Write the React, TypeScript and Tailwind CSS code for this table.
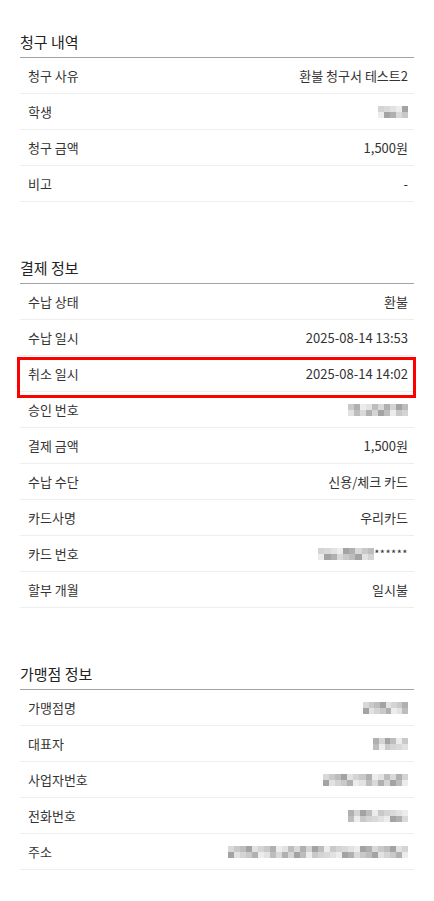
import React from "react";

type Row = { label: string; value?: string; blur?: number; suffix?: string; seed?: number };

const billing: Row[] = [
  { label: "청구 사유", value: "환불 청구서 테스트2" },
  { label: "학생", blur: 30, seed: 3 },
  { label: "청구 금액", value: "1,500원" },
  { label: "비고", value: "-" },
];

const payment: Row[] = [
  { label: "수납 상태", value: "환불" },
  { label: "수납 일시", value: "2025-08-14 13:53" },
  { label: "취소 일시", value: "2025-08-14 14:02" },
  { label: "승인 번호", blur: 60, seed: 7 },
  { label: "결제 금액", value: "1,500원" },
  { label: "수납 수단", value: "신용/체크 카드" },
  { label: "카드사명", value: "우리카드" },
  { label: "카드 번호", blur: 56, seed: 11, suffix: "******" },
  { label: "할부 개월", value: "일시불" },
];

const merchant: Row[] = [
  { label: "가맹점명", blur: 45, seed: 5 },
  { label: "대표자", blur: 35, seed: 9 },
  { label: "사업자번호", blur: 85, seed: 13 },
  { label: "전화번호", blur: 60, seed: 17 },
  { label: "주소", blur: 180, seed: 21 },
];

const grays = ["#ececec", "#d4d4d4", "#bdbdbd", "#b0b0b0", "#e2e2e2", "#c9c9c9", "#a3a3a3", "#d9d9d9"];

// pixelated placeholder for masked values
function Blur({ width, seed = 1 }: { width: number; seed?: number }) {
  const cols = Math.round(width / 6);
  const cells = (row: number) =>
    Array.from({ length: cols }, (_, i) => grays[(i * 5 + seed * 3 + row * 7 + ((i * i) % 3)) % grays.length]);
  return (
    <div className="flex flex-col" style={{ width }}>
      {[0, 1].map((r) => (
        <div key={r} className="flex">
          {cells(r).map((c, i) => (
            <div key={i} className="h-[6px] flex-1" style={{ backgroundColor: c }} />
          ))}
        </div>
      ))}
    </div>
  );
}

function Section({ title, rows, className = "" }: { title: string; rows: Row[]; className?: string }) {
  return (
    <section className={className}>
      <h2 className="text-[15px] leading-[22px] pb-[4px] text-[#222] border-b border-[#a3a3a3]">{title}</h2>
      {rows.map((r) => (
        <div key={r.label} className="relative h-[36px] pl-2 pr-[6px] flex items-center justify-between border-b border-[#eeeeee] text-[13px] text-[#333]">
          <span>{r.label}</span>
          {r.blur ? (
            <div className="flex items-center">
              <Blur width={r.blur} seed={r.seed} />
              {r.suffix && <span className="text-[11px] tracking-[0.5px] leading-none">{r.suffix}</span>}
            </div>
          ) : (
            <span>{r.value}</span>
          )}
          {r.label === "취소 일시" && (
            <div className="absolute -left-[3px] -right-[2px] top-[1px] -bottom-[7px] border-[3px] border-[#ff0000] pointer-events-none" />
          )}
        </div>
      ))}
    </section>
  );
}

export default function App() {
  return (
    <div
      className="w-[434px] min-h-[901px] bg-white px-5 pt-[31px]"
      style={{ fontFamily: '"Noto Sans CJK KR", "Noto Sans", sans-serif' }}
    >
      <Section title="청구 내역" rows={billing} />
      <Section title="결제 정보" rows={payment} className="mt-[55px]" />
      <Section title="가맹점 정보" rows={merchant} className="mt-[55px]" />
    </div>
  );
}
